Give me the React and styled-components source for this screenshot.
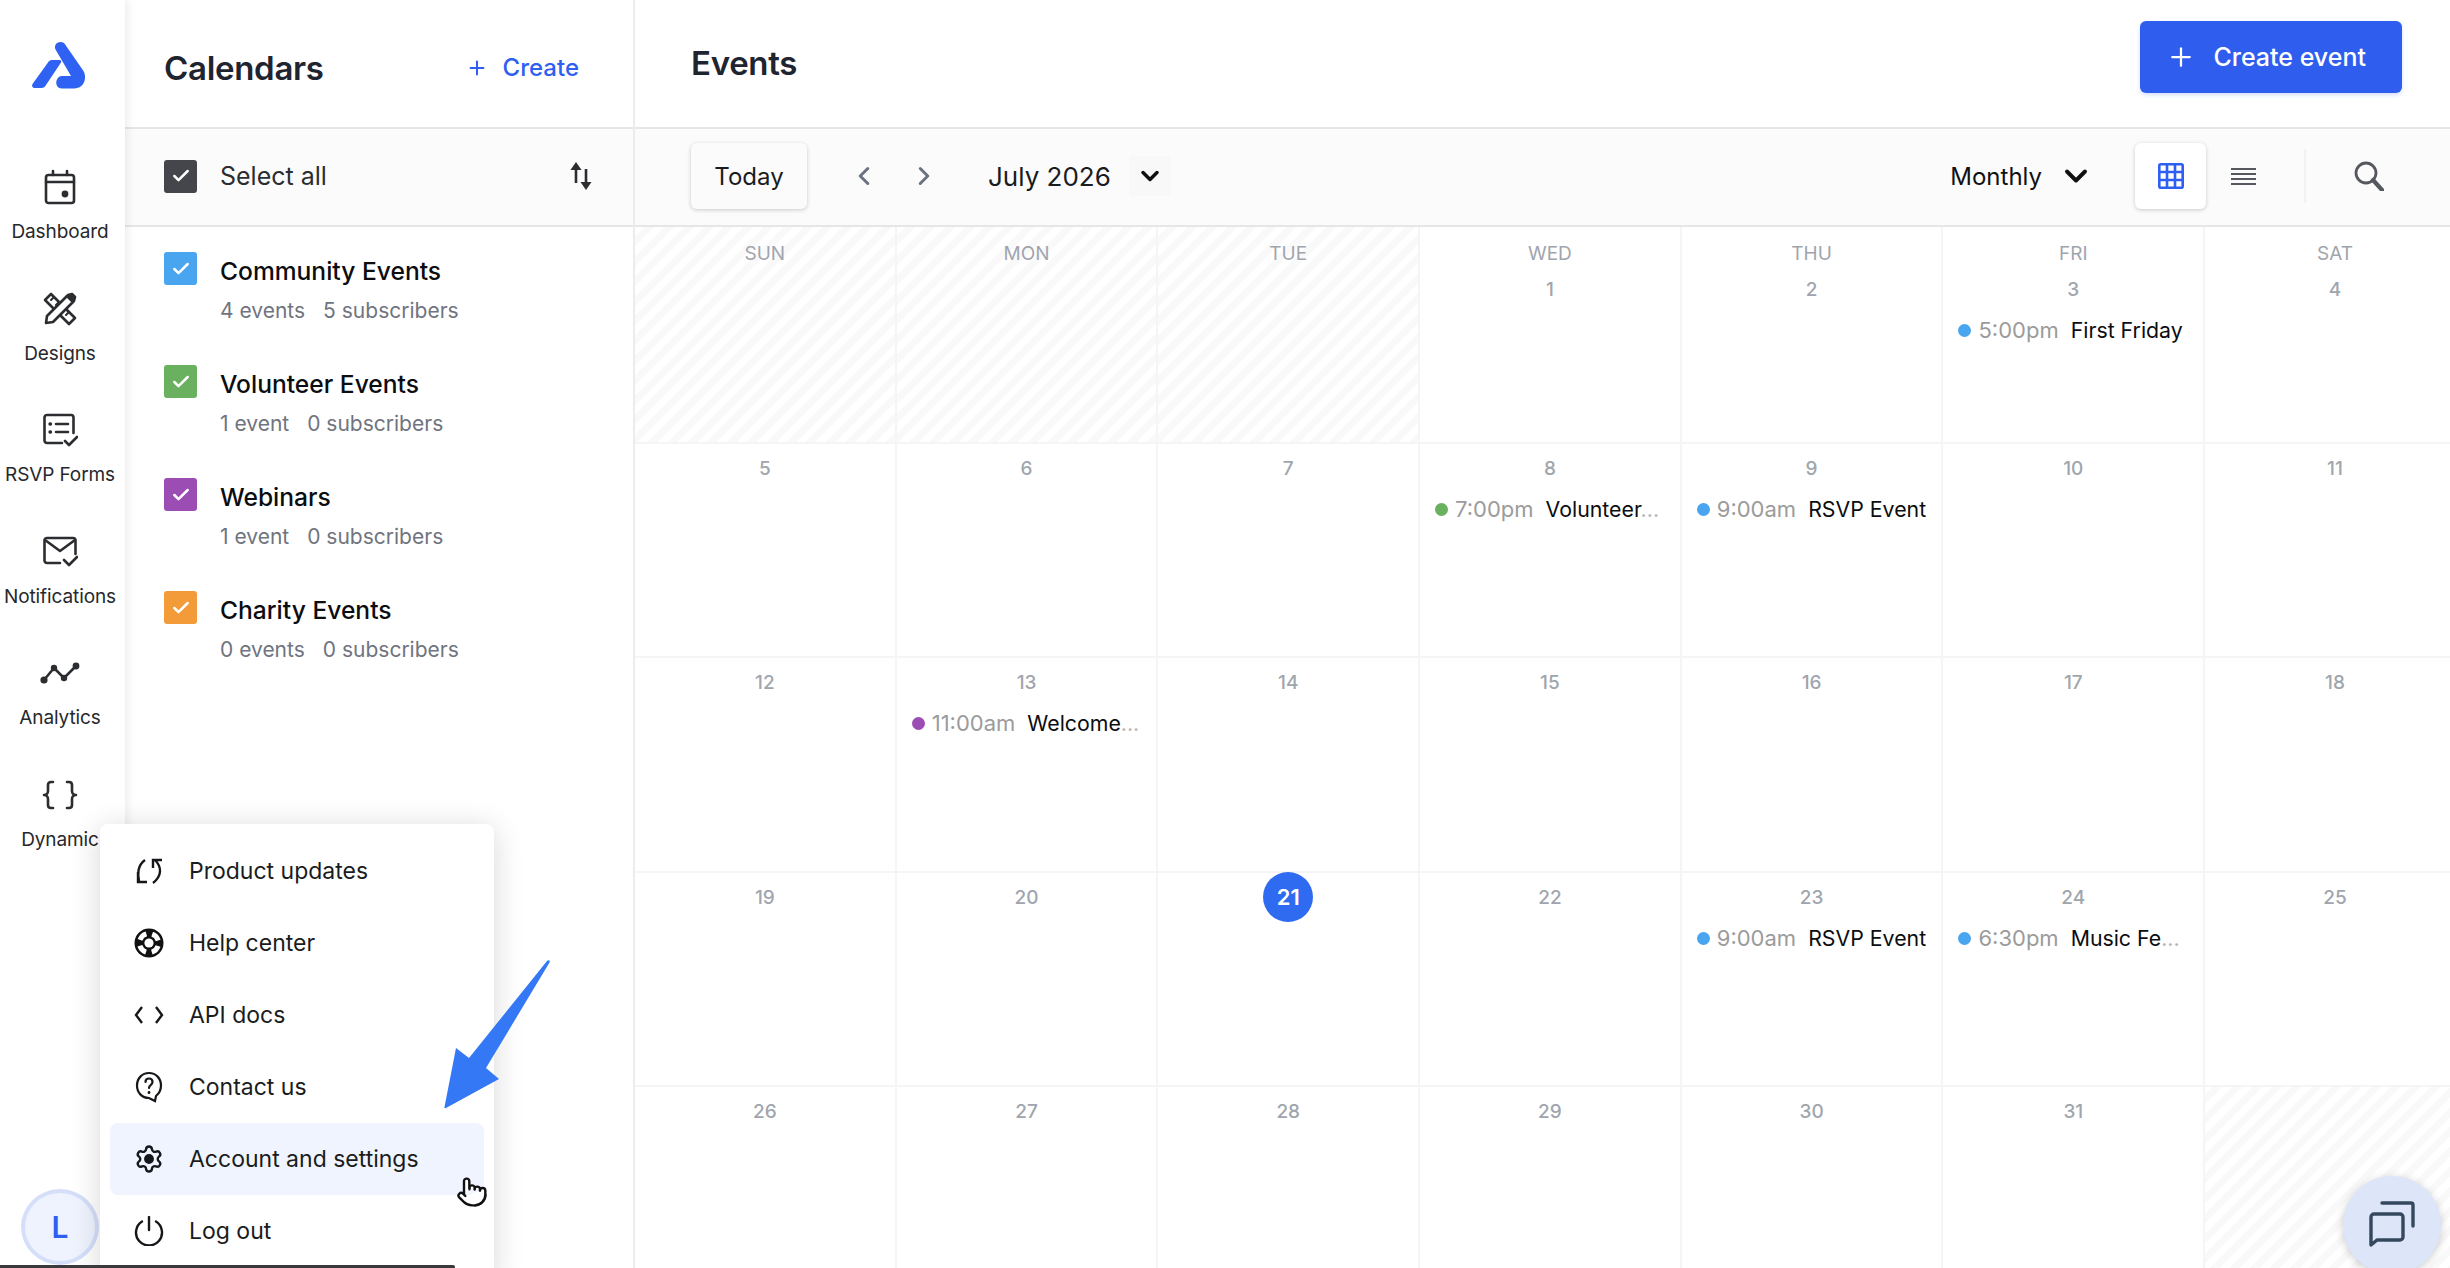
import React from 'react'
import styled, { createGlobalStyle } from 'styled-components'
import { Plus, ChevronLeft, ChevronRight, ChevronDown, Check, Pointer, Settings } from 'lucide-react'

const GlobalStyle = createGlobalStyle`
  html, body {
    margin: 0;
    padding: 0;
    background: #fff;
    font-family: "Inter", "Liberation Sans", sans-serif;
    color: #111;
  }
  * { box-sizing: border-box; }
`;

const Page = styled.div`
  position: relative;
  display: flex;
  width: 100%;
  height: 1268px;
  overflow: hidden;
`;

const Sidebar = styled.aside`
  position: relative;
  z-index: 2;
  flex: 0 0 125px;
  padding-right: 5px;
  display: flex;
  flex-direction: column;
  align-items: center;
  background: #fff;
  box-shadow: 3px 0 8px rgba(0, 0, 0, 0.07);
`;

const LogoWrap = styled.div`
  height: 128px;
  padding-top: 35px;
  display: flex;
  justify-content: center;
  svg { display: block; }
`;

const Nav = styled.nav`
  width: 100%;
  padding-top: 36px;
  display: flex;
  flex-direction: column;
`;

const NavItem = styled.div`
  height: 121.5px;
  display: flex;
  flex-direction: column;
  align-items: center;
`;

const NavIcon = styled.div`
  height: 46px;
  display: flex;
  align-items: center;
  justify-content: center;
  color: #2b2d31;
`;

const NavLabel = styled.div`
  margin-top: 10px;
  font-size: 19px;
  line-height: 24px;
  letter-spacing: -0.1px;
  color: #26282c;
  white-space: nowrap;
`;

const Avatar = styled.div`
  margin-top: auto;
  margin-bottom: 3px;
  width: 78px;
  height: 76px;
  border-radius: 50%;
  border: 4px solid #d5dffa;
  background: #eef3fe;
  display: flex;
  align-items: center;
  justify-content: center;
  color: #2f5ff0;
  font-size: 30px;
  font-weight: 600;
`;

const Panel = styled.section`
  flex: 0 0 510px;
  border-right: 2px solid #ececee;
  display: flex;
  flex-direction: column;
`;

const PanelHeader = styled.header`
  flex: 0 0 129px;
  border-bottom: 2px solid #e6e6e8;
  padding: 8px 54px 0 39px;
  display: flex;
  align-items: center;
  justify-content: space-between;
`;

const PanelTitle = styled.h2`
  margin: 0;
  font-size: 33px;
  font-weight: 600;
  letter-spacing: -0.3px;
  color: #1f2530;
`;

const CreateLink = styled.div`
  display: flex;
  align-items: center;
  gap: 15px;
  font-size: 24px;
  font-weight: 500;
  color: #2f5ff0;
`;

const SelectRow = styled.div`
  flex: 0 0 98px;
  background: #fbfbfc;
  border-bottom: 2px solid #e6e6e8;
  padding: 0 40px 2px 39px;
  display: flex;
  align-items: center;
`;

const CheckBox = styled.div`
  flex: 0 0 33px;
  height: 33px;
  border-radius: 3px;
  background: ${p => p.$color};
  color: #fff;
  display: flex;
  align-items: center;
  justify-content: center;
`;

const SelectLabel = styled.div`
  margin-left: 23px;
  flex: 1;
  font-size: 25px;
  color: #2b2d31;
`;

const CalendarList = styled.div`
  padding-top: 25px;
  display: flex;
  flex-direction: column;
`;

const CalendarRow = styled.div`
  height: 113px;
  padding-left: 39px;
  display: flex;
  gap: 23px;
`;

const CalendarName = styled.div`
  font-size: 24.6px;
  line-height: 40px;
  font-weight: 500;
  margin-top: -1px;
  color: #0c0d10;
`;

const CalendarMeta = styled.div`
  display: flex;
  gap: 18px;
  font-size: 21px;
  line-height: 28px;
  margin-top: 6px;
  color: #6f7480;
`;

const Main = styled.main`
  flex: 1;
  min-width: 0;
  display: flex;
  flex-direction: column;
`;

const MainHeader = styled.header`
  flex: 0 0 129px;
  border-bottom: 2px solid #e6e6e8;
  padding: 21px 48px 0 56px;
  display: flex;
  align-items: flex-start;
  justify-content: space-between;
`;

const MainTitle = styled.h1`
  margin: 0;
  margin-top: 19px;
  font-size: 33px;
  line-height: 46px;
  font-weight: 600;
  letter-spacing: -0.3px;
  color: #1f2530;
`;

const CreateButton = styled.button`
  width: 262px;
  height: 72px;
  padding: 0 36px 0 26px;
  border: 0;
  border-radius: 6px;
  background: #2f5eef;
  box-shadow: 0 2px 4px rgba(47, 94, 239, 0.2);
  color: #fff;
  font-family: inherit;
  font-size: 25px;
  font-weight: 500;
  display: flex;
  align-items: center;
  justify-content: space-between;
`;

const Toolbar = styled.div`
  flex: 0 0 98px;
  background: #fbfbfc;
  border-bottom: 2px solid #e6e6e8;
  padding: 0 0 2px 56px;
  display: flex;
  align-items: center;
`;

const TodayButton = styled.div`
  width: 116px;
  height: 66px;
  border-radius: 6px;
  background: #fbfbfc;
  box-shadow: 0 1px 4px rgba(0, 0, 0, 0.2);
  font-size: 24px;
  color: #1a1c20;
  display: flex;
  align-items: center;
  justify-content: center;
`;

const Arrows = styled.div`
  margin-left: 42px;
  width: 90px;
  display: flex;
  justify-content: space-between;
  color: #6b7280;
`;

const MonthLabel = styled.div`
  margin-left: 49px;
  font-size: 26px;
  color: #1a1c20;
`;

const MonthCaret = styled.div`
  margin-left: 18px;
  width: 42px;
  height: 40px;
  background: #f8f8f9;
  border-radius: 4px;
  display: flex;
  align-items: center;
  justify-content: center;
  color: #111;
`;

const ViewSelect = styled.div`
  margin-left: auto;
  display: flex;
  align-items: center;
  gap: 16px;
  font-size: 24px;
  color: #111;
`;

const ViewCard = styled.div`
  margin-left: 41px;
  width: 71px;
  height: 66px;
  border-radius: 6px;
  background: #fff;
  box-shadow: 0 1px 4px rgba(0, 0, 0, 0.2);
  display: flex;
  align-items: center;
  justify-content: center;
`;

const ListToggle = styled.div`
  margin-left: 25px;
  width: 25px;
  display: flex;
  color: #55585e;
`;

const ToolDivider = styled.div`
  margin-left: 48px;
  width: 2px;
  height: 54px;
  background: #f2f2f3;
`;

const SearchBox = styled.div`
  margin-left: 48px;
  margin-right: 66px;
  display: flex;
  color: #55585e;
`;

const Grid = styled.div`
  flex: 0 0 auto;
  width: 1832px;
  display: grid;
  grid-template-columns: repeat(7, 261.7px);
  grid-template-rows: 217px 214px 215px 214px 215px;
`;

const stripes = `repeating-linear-gradient(-45deg, #f9f9fa 0 7px, #fff 7px 14px)`;

const Cell = styled.div`
  min-width: 0;
  border-right: 2px solid #f5f5f6;
  border-bottom: 2px solid #f5f5f6;
  padding-top: ${p => (p.$first ? '15px' : '12px')};
  background: ${p => (p.$off ? stripes : '#fff')};
  display: flex;
  flex-direction: column;
  align-items: center;
`;

const DayName = styled.div`
  font-size: 19px;
  line-height: 24px;
  color: #a0a5ad;
  margin-bottom: 11px;
`;

const DayNum = styled.div`
  height: 26px;
  font-size: 19px;
  line-height: 26px;
  font-weight: 500;
  color: #a0a5ad;
`;

const TodayNum = styled.div`
  width: 50px;
  height: 50px;
  margin-top: -13px;
  margin-bottom: -11px;
  border-radius: 50%;
  background: #2f6bf0;
  color: #fff;
  font-size: 22px;
  font-weight: 600;
  display: flex;
  align-items: center;
  justify-content: center;
`;

const EventRow = styled.div`
  align-self: stretch;
  margin-top: 13px;
  padding-left: 15px;
  display: flex;
  align-items: center;
  white-space: nowrap;
  font-size: 22px;
  line-height: 28px;
`;

const Dot = styled.span`
  flex: 0 0 13px;
  height: 13px;
  border-radius: 50%;
  background: ${p => p.$color};
`;

const EventTime = styled.span`
  margin-left: 7px;
  color: #9b9b9b;
`;

const EventTitle = styled.span`
  margin-left: 12px;
  font-size: 21.3px;
  color: #0c0d10;
`;

const Fade = styled.span`
  color: #b5b5b5;
`;

/* things lying over the page */

const Menu = styled.div`
  position: absolute;
  z-index: 3;
  left: 100px;
  top: 824px;
  width: 394px;
  height: 460px;
  padding: 11px 10px 0;
  border-radius: 8px;
  background: #fff;
  box-shadow: 0 4px 30px rgba(0, 0, 0, 0.16);
  display: flex;
  flex-direction: column;
`;

const MenuItem = styled.div`
  flex: 0 0 72px;
  padding-left: 21px;
  border-radius: 8px;
  background: ${p => (p.$active ? '#f0f4fe' : 'transparent')};
  display: flex;
  align-items: center;
  gap: 22px;
  font-size: 23px;
  color: #1a1c20;
`;

const MenuIcon = styled.div`
  width: 36px;
  display: flex;
  justify-content: center;
  color: #15171a;
`;

const ArrowMark = styled.svg`
  position: absolute;
  z-index: 4;
  left: 440px;
  top: 958px;
`;

const HandCursor = styled.div`
  position: absolute;
  z-index: 5;
  left: 456px;
  top: 1176px;
  display: flex;
  color: #111;
`;

const BottomBar = styled.div`
  position: absolute;
  z-index: 6;
  left: 0;
  bottom: 0;
  width: 455px;
  height: 3px;
  background: #3a3a3c;
  border-radius: 0 2px 0 0;
`;

const ChatBubble = styled.div`
  position: absolute;
  z-index: 4;
  left: 2343px;
  top: 1176px;
  width: 98px;
  height: 98px;
  border-radius: 50%;
  background: #dde5f9;
  box-shadow: 0 2px 10px rgba(0, 0, 0, 0.2);
  display: flex;
  align-items: center;
  justify-content: center;
  padding-bottom: 2px;
`;

const Logo = () => (
  <svg width="70" height="65" viewBox="0 0 70 65" fill="#2f62f2">
    <path d="M30.500 14.500c-1.500-3.500.5-7.500 5-7.500 2.500 0 4 1.200 5 3l18 26c3 5 2.500 17-9.500 17.500H37c-5 0-7-5-5-9 1-2 2.500-3.500 5-3.500h9L30.500 14.500z" />
    <path d="M23 27.500c.8-1.600 2-2.500 4-2.500h7.500c1.500 0 2.200 1 1.500 2.500L21 50c-1 2-2.500 3-4.500 3H10c-2.500 0-3.500-2-2.500-4L23 27.500z" />
  </svg>
)

const navIconProps = { fill: 'none', stroke: 'currentColor', strokeWidth: 2.6, strokeLinecap: 'round', strokeLinejoin: 'round' }

const DashboardIcon = () => (
  <svg width="32" height="36" viewBox="0 0 32 36" {...navIconProps}>
    <rect x="2" y="6" width="28" height="28" rx="2.5" />
    <path d="M2 13h28M9 2v4M23 2v4" />
    <circle cx="21" cy="25" r="3.400" fill="currentColor" stroke="none" />
  </svg>
)

const DesignsIcon = () => (
  <svg width="34" height="34" viewBox="0 0 34 34" {...navIconProps}>
    <path d="M2 8l6-6 24 24-6 6z" />
    <path d="M8 8l3-3M13 13l3-3M18 18l3-3M23 23l3-3" strokeWidth="2" />
    <path d="M3 31l1-7L24 4l6 6-20 20z" fill="#fff" />
    <path d="M25 3l6 6 1-4-3-3z" fill="currentColor" />
  </svg>
)

const FormsIcon = () => (
  <svg width="36" height="34" viewBox="0 0 36 34" {...navIconProps}>
    <path d="M20 30H5a2.500 2.500 0 0 1-2.500-2.500v-23A2.500 2.500 0 0 1 5 2h24a2.500 2.500 0 0 1 2.500 2.500V20" />
    <path d="M14 11h12M14 19h12" />
    <path d="M8 11h.5M8 19h.5" strokeWidth="3.400" />
    <path d="M23 28l4 4 8-8" />
  </svg>
)

const NotificationsIcon = () => (
  <svg width="36" height="32" viewBox="0 0 36 32" {...navIconProps}>
    <path d="M18 27H5a2.500 2.500 0 0 1-2.500-2.500v-20A2.500 2.500 0 0 1 5 2h26a2.500 2.500 0 0 1 2.500 2.500V18" />
    <path d="M3 4l15 11L33 4" />
    <path d="M22 24l5 5 8-8" />
  </svg>
)

const AnalyticsIcon = () => (
  <svg width="40" height="24" viewBox="0 0 40 24" {...navIconProps}>
    <path d="M4 19L14 7l10 10L36 5" />
    <circle cx="4" cy="19" r="3.600" fill="currentColor" stroke="none" />
    <circle cx="14" cy="7" r="3.200" fill="currentColor" stroke="none" />
    <circle cx="24" cy="17" r="3.200" fill="currentColor" stroke="none" />
    <circle cx="36" cy="5" r="3.400" fill="currentColor" stroke="none" />
  </svg>
)

const DynamicIcon = () => (
  <svg width="36" height="30" viewBox="0 0 36 30" {...navIconProps}>
    <path d="M11 2H9C7 2 6 3.500 6 5v6c0 2-1.500 4-4 4 2.500 0 4 2 4 4v6c0 1.500 1 3 3 3h2" />
    <path d="M25 2h2c2 0 3 1.500 3 3v6c0 2 1.500 4 4 4-2.500 0-4 2-4 4v6c0 1.500-1 3-3 3h-2" />
  </svg>
)

const SortIcon = () => (
  <svg width="24" height="30" viewBox="0 0 24 30" fill="none" stroke="#2b2d31" strokeWidth="2.600">
    <path d="M7 4v18M17 8v18" />
    <path d="M1.500 9L7 1l5.500 8z M11.500 21L17 29l5.500-8z" fill="#2b2d31" stroke="none" />
  </svg>
)

const GridIcon = () => (
  <svg width="26" height="26" viewBox="0 0 26 26" fill="none" stroke="#2f5ff0" strokeWidth="2.600">
    <rect x="1.300" y="1.300" width="23.400" height="23.400" rx="1.500" />
    <path d="M9 1v24M17 1v24M1 9h24M1 17h24" />
  </svg>
)

const ListIcon = () => (
  <svg width="25" height="19" viewBox="0 0 25 19" fill="none" stroke="currentColor" strokeWidth="2">
    <path d="M0 2h25M0 7h25M0 12h25M0 17h25" />
  </svg>
)

const SearchIcon = () => (
  <svg width="30" height="30" viewBox="0 0 30 30" fill="none" stroke="currentColor">
    <circle cx="12" cy="12" r="10" strokeWidth="2.800" />
    <path d="M19 19l9 10" strokeWidth="4.200" strokeLinecap="round" />
  </svg>
)

const UpdatesIcon = () => (
  <svg width="26" height="28" viewBox="0 0 26 28" fill="none" stroke="currentColor" strokeWidth="2.400">
    <path d="M9 3C2 8 1 17 3 24" />
    <path d="M2 15v10h9" />
    <path d="M19 3c7 7 7 16-2 23" />
    <path d="M26 3h-9v8" />
  </svg>
)

const HelpIcon = () => (
  <svg width="30" height="30" viewBox="0 0 30 30">
    <circle cx="15" cy="15" r="14.500" fill="#111" />
    <circle cx="15" cy="15" r="9.500" fill="none" stroke="#fff" strokeWidth="5" strokeDasharray="9 5.920" strokeDashoffset="-2.960" />
    <circle cx="15" cy="15" r="4.600" fill="#fff" />
  </svg>
)

const CodeIcon = () => (
  <svg width="30" height="20" viewBox="0 0 30 20" fill="none" stroke="currentColor" strokeWidth="2.400">
    <path d="M8 2L2 10l6 8M22 2l6 8-6 8" />
  </svg>
)

const ContactIcon = () => (
  <svg width="28" height="32" viewBox="0 0 28 32" fill="none" stroke="currentColor" strokeWidth="2.200" strokeLinecap="round">
    <path d="M14 27C7 27 2 21.500 2 14.500S7 2 14 2s12 5.500 12 12.500c0 5-2 8-5 10.500l-1 5z" />
    <path d="M10.500 11c0-2 1.500-3.500 3.500-3.500s3.500 1.500 3.500 3.500c0 3-3.500 3-3.500 6" />
    <path d="M14 21.500v.2" strokeWidth="2.800" />
  </svg>
)

const GearIcon = styled(Settings)`
  circle { fill: currentColor; }
`;

const PowerIcon = () => (
  <svg width="30" height="30" viewBox="0 0 30 30" fill="none" stroke="currentColor" strokeWidth="2.400" strokeLinecap="round">
    <path d="M8 5.500a13 13 0 1 0 14 0" />
    <path d="M15 1v13" />
  </svg>
)

const ChatIcon = () => (
  <svg width="46" height="46" viewBox="0 0 46 46" fill="none" stroke="#34495e" strokeWidth="3.400" strokeLinecap="round" strokeLinejoin="round">
    <path d="M2 44V16a3 3 0 0 1 3-3h26a3 3 0 0 1 3 3v20a3 3 0 0 1-3 3H8z" />
    <path d="M13 2h29a2 2 0 0 1 2 2v21" />
  </svg>
)

const navItems = [
  { label: 'Dashboard', icon: <DashboardIcon /> },
  { label: 'Designs', icon: <DesignsIcon /> },
  { label: 'RSVP Forms', icon: <FormsIcon /> },
  { label: 'Notifications', icon: <NotificationsIcon /> },
  { label: 'Analytics', icon: <AnalyticsIcon /> },
  { label: 'Dynamic', icon: <DynamicIcon /> },
]

const calendars = [
  { name: 'Community Events', events: '4 events', subs: '5 subscribers', color: '#4aa5f0' },
  { name: 'Volunteer Events', events: '1 event', subs: '0 subscribers', color: '#69b05f' },
  { name: 'Webinars', events: '1 event', subs: '0 subscribers', color: '#9b4db3' },
  { name: 'Charity Events', events: '0 events', subs: '0 subscribers', color: '#f29b38' },
]

const menuItems = [
  { label: 'Product updates', icon: <UpdatesIcon /> },
  { label: 'Help center', icon: <HelpIcon /> },
  { label: 'API docs', icon: <CodeIcon /> },
  { label: 'Contact us', icon: <ContactIcon /> },
  { label: 'Account and settings', icon: <GearIcon size={30} strokeWidth={1.9} />, active: true },
  { label: 'Log out', icon: <PowerIcon /> },
]

const BLUE = '#4aa5f0'
const GREEN = '#69b05f'
const PURPLE = '#9b4db3'

const days = ['SUN', 'MON', 'TUE', 'WED', 'THU', 'FRI', 'SAT']

const events = {
  3: { time: '5:00pm', title: 'First Friday', color: BLUE },
  8: { time: '7:00pm', title: 'Volunteer', cut: true, color: GREEN },
  9: { time: '9:00am', title: 'RSVP Event', color: BLUE },
  13: { time: '11:00am', title: 'Welcome', cut: true, color: PURPLE },
  23: { time: '9:00am', title: 'RSVP Event', color: BLUE },
  24: { time: '6:30pm', title: 'Music Fe', cut: true, color: BLUE },
}

// 3 blank days before the 1st, 1 after the 31st
const cells = [null, null, null]
for (let d = 1; d <= 31; d++) cells.push(d)
cells.push(null)

const App = () => {
  return (
    <Page>
      <GlobalStyle />
      <Sidebar>
        <LogoWrap><Logo /></LogoWrap>
        <Nav>
          {navItems.map(item => (
            <NavItem key={item.label}>
              <NavIcon>{item.icon}</NavIcon>
              <NavLabel>{item.label}</NavLabel>
            </NavItem>
          ))}
        </Nav>
        <Avatar>L</Avatar>
      </Sidebar>

      <Panel>
        <PanelHeader>
          <PanelTitle>Calendars</PanelTitle>
          <CreateLink>
            <Plus size={22} strokeWidth={2.2} />
            Create
          </CreateLink>
        </PanelHeader>
        <SelectRow>
          <CheckBox $color="#44464c"><Check size={20} strokeWidth={3} /></CheckBox>
          <SelectLabel>Select all</SelectLabel>
          <SortIcon />
        </SelectRow>
        <CalendarList>
          {calendars.map(c => (
            <CalendarRow key={c.name}>
              <CheckBox $color={c.color}><Check size={20} strokeWidth={3} /></CheckBox>
              <div>
                <CalendarName>{c.name}</CalendarName>
                <CalendarMeta>
                  <span>{c.events}</span>
                  <span>{c.subs}</span>
                </CalendarMeta>
              </div>
            </CalendarRow>
          ))}
        </CalendarList>
      </Panel>

      <Main>
        <MainHeader>
          <MainTitle>Events</MainTitle>
          <CreateButton>
            <Plus size={30} strokeWidth={1.8} />
            Create event
          </CreateButton>
        </MainHeader>
        <Toolbar>
          <TodayButton>Today</TodayButton>
          <Arrows>
            <ChevronLeft size={30} strokeWidth={2.4} />
            <ChevronRight size={30} strokeWidth={2.4} />
          </Arrows>
          <MonthLabel>July 2026</MonthLabel>
          <MonthCaret><ChevronDown size={28} strokeWidth={3} /></MonthCaret>
          <ViewSelect>
            Monthly
            <ChevronDown size={36} strokeWidth={2.6} />
          </ViewSelect>
          <ViewCard><GridIcon /></ViewCard>
          <ListToggle><ListIcon /></ListToggle>
          <ToolDivider />
          <SearchBox><SearchIcon /></SearchBox>
        </Toolbar>
        <Grid>
          {cells.map((d, i) => {
            const ev = d && events[d]
            return (
              <Cell key={i} $off={!d} $first={i < 7}>
                {i < 7 && <DayName>{days[i]}</DayName>}
                {d === 21 ? <TodayNum>{d}</TodayNum> : d && <DayNum>{d}</DayNum>}
                {ev && (
                  <EventRow>
                    <Dot $color={ev.color} />
                    <EventTime>{ev.time}</EventTime>
                    <EventTitle>{ev.title}{ev.cut && <Fade>...</Fade>}</EventTitle>
                  </EventRow>
                )}
              </Cell>
            )
          })}
        </Grid>
      </Main>

      <Menu>
        {menuItems.map(item => (
          <MenuItem key={item.label} $active={item.active}>
            <MenuIcon>{item.icon}</MenuIcon>
            {item.label}
          </MenuItem>
        ))}
      </Menu>

      <ArrowMark width="115" height="155" viewBox="0 0 115 155">
        <path d="M107 3c1-1.500 3.500-.500 2.500 1.500L46 110l13 11-53 29c-1 .500-2 0-1.500-1L16 90l13 10z" fill="#3478f6" />
      </ArrowMark>

      <HandCursor>
        <Pointer size={32} strokeWidth={1.8} fill="#fff" />
      </HandCursor>

      <ChatBubble><ChatIcon /></ChatBubble>
      <BottomBar />
    </Page>
  )
}

export default App
